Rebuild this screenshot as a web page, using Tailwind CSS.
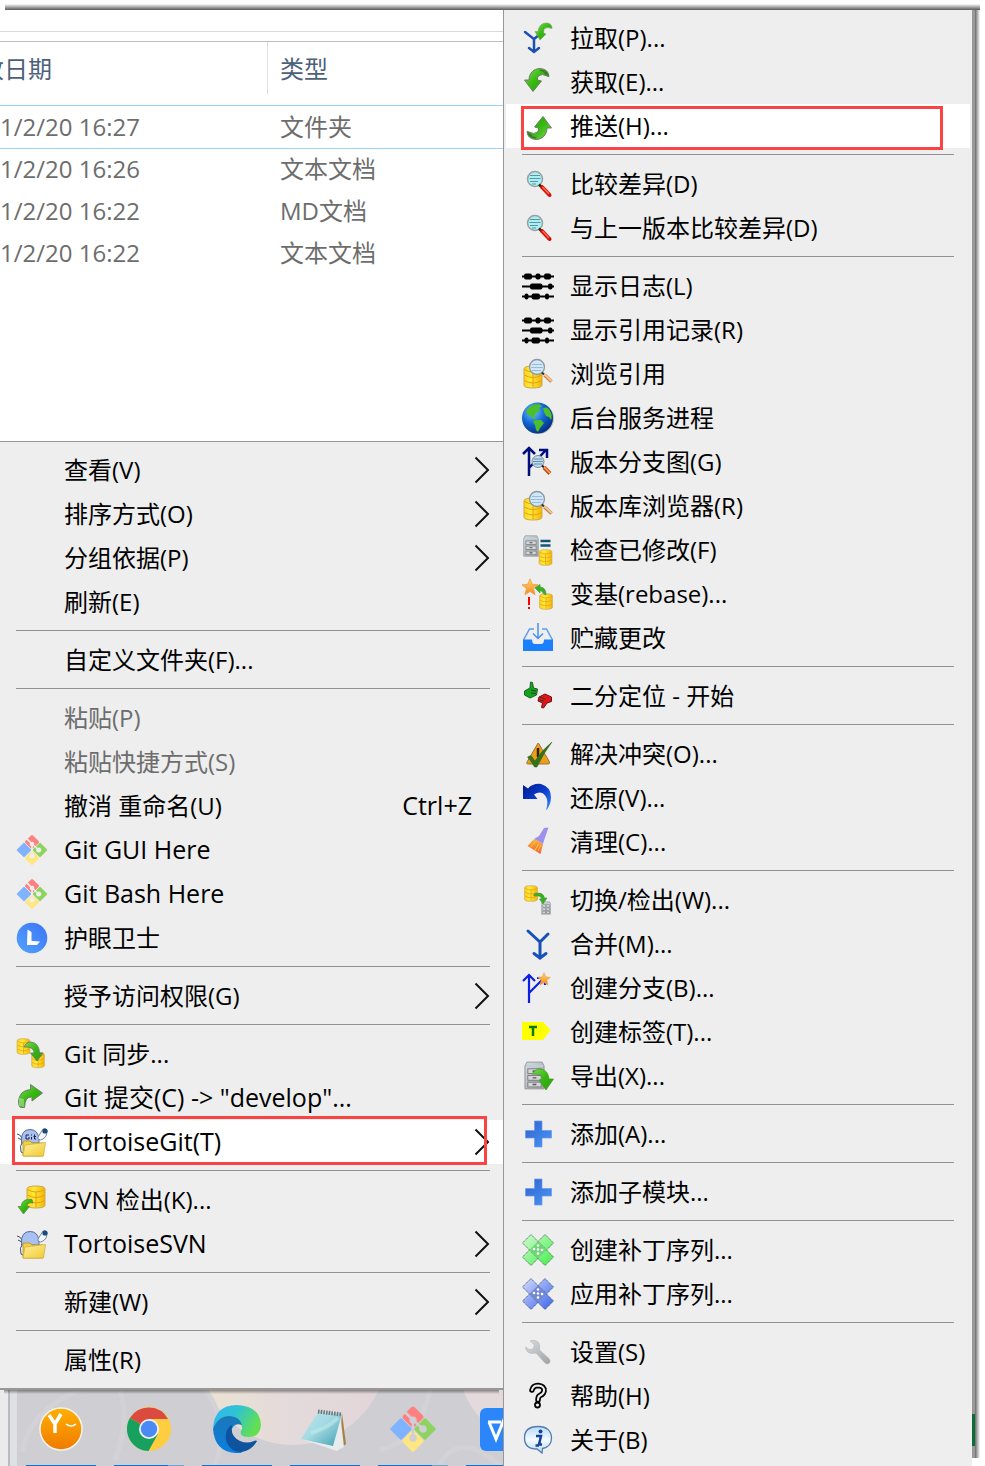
<!DOCTYPE html>
<html lang="zh-CN">
<head>
<meta charset="utf-8">
<title>TortoiseGit</title>
<script src="https://cdn.jsdelivr.net/npm/@tailwindcss/browser@4"></script>
</head>
<body class="flex min-h-screen flex-col overflow-x-hidden bg-white font-['Open_Sans','Noto_Sans_CJK_SC',sans-serif] text-2xl text-black">

<svg class="absolute size-0" aria-hidden="true">
  <defs>
    <linearGradient id="gGreen" x1="0" y1="0" x2="1" y2="1"><stop offset="0" stop-color="#7ed957"/><stop offset=".5" stop-color="#35b80f"/><stop offset="1" stop-color="#2c9a10"/></linearGradient>
    <linearGradient id="gGold" x1="0" y1="0" x2="1" y2="0"><stop offset="0" stop-color="#ffd21a"/><stop offset=".4" stop-color="#ffe83d"/><stop offset="1" stop-color="#f5b400"/></linearGradient>
    <linearGradient id="gPlus" x1="0" y1="0" x2="1" y2="1"><stop offset="0" stop-color="#2f62cf"/><stop offset="1" stop-color="#4a98f5"/></linearGradient>
    <linearGradient id="gUndo" x1="0" y1="0" x2="1" y2="1"><stop offset="0" stop-color="#001a8c"/><stop offset=".5" stop-color="#0a3ccc"/><stop offset="1" stop-color="#3f8cff"/></linearGradient>
    <linearGradient id="gSteel" x1="0" y1="0" x2="1" y2="1"><stop offset="0" stop-color="#d8dcdf"/><stop offset="1" stop-color="#9ea3a7"/></linearGradient>
    <linearGradient id="gFolder" x1="0" y1="0" x2="1" y2="1"><stop offset="0" stop-color="#ffee9a"/><stop offset="1" stop-color="#f1cc35"/></linearGradient>
    <linearGradient id="gPatchG" x1="0" y1="0" x2="1" y2="1"><stop offset="0" stop-color="#d4fbd2"/><stop offset="1" stop-color="#3fee48"/></linearGradient>
    <linearGradient id="gPatchB" x1="0" y1="0" x2="1" y2="1"><stop offset="0" stop-color="#d3defc"/><stop offset="1" stop-color="#3a63ea"/></linearGradient>
    <linearGradient id="gBroom" x1="0" y1="0" x2="0" y2="1"><stop offset="0" stop-color="#f9b93a"/><stop offset="1" stop-color="#ff5a2a"/></linearGradient>
    <linearGradient id="gStar" x1="0" y1="0" x2="0" y2="1"><stop offset="0" stop-color="#ffd46b"/><stop offset="1" stop-color="#f58a1f"/></linearGradient>
    <radialGradient id="gGlobe" cx=".35" cy=".3" r=".8"><stop offset="0" stop-color="#6cc6ff"/><stop offset=".5" stop-color="#1264d0"/><stop offset="1" stop-color="#03256e"/></radialGradient>
    <linearGradient id="gInfo" x1="0" y1="0" x2="0" y2="1"><stop offset="0" stop-color="#b8dcf9"/><stop offset=".5" stop-color="#f4faff"/><stop offset="1" stop-color="#b4dafa"/></linearGradient>
    <linearGradient id="gY" x1="0" y1="0" x2="0" y2="1"><stop offset="0" stop-color="#ffb000"/><stop offset="1" stop-color="#ef7a00"/></linearGradient>
    <linearGradient id="gEdgeTop" x1="0" y1="0" x2="1" y2=".4"><stop offset="0" stop-color="#34b4f4"/><stop offset=".5" stop-color="#2fc3d2"/><stop offset="1" stop-color="#62e052"/></linearGradient>
    <linearGradient id="gEdgeLeft" x1="0" y1="0" x2="0" y2="1"><stop offset="0" stop-color="#1b77b8"/><stop offset="1" stop-color="#0b7fe0"/></linearGradient>
    <linearGradient id="gNote" x1="0" y1="0" x2="1" y2="1"><stop offset="0" stop-color="#b9e4ea"/><stop offset=".45" stop-color="#a5dbe3"/><stop offset="1" stop-color="#3e9fb2"/></linearGradient>
    <linearGradient id="gL" x1="0" y1="1" x2="1" y2="0"><stop offset="0" stop-color="#55a2ff"/><stop offset="1" stop-color="#3a74f5"/></linearGradient>

    <symbol id="arrow-dl" viewBox="0 0 32 32"><path d="M11 25.500L2.500 14H7C7 7 12 2.500 18 2.500Q26.500 3 27 10.500Q26 10.500 25 10Q20 7 16.500 10Q15 11.500 15.500 14L19.500 15Z" fill="url(#gGreen)" stroke="#6f7f6a" stroke-width="1"/><path d="M18 3.500Q26 4 26.500 10L22.500 8Q22 5 17.500 5Z" fill="#3c7d2a"/></symbol>
    <symbol id="db" viewBox="0 0 20 24"><path d="M1 4Q1 1 10 1T19 4V20Q19 23 10 23T1 20Z" fill="url(#gGold)" stroke="#c9a94e" stroke-width="1"/><path d="M1.500 4.500Q5 7 10 7T18.500 4.500M1.500 10Q5 12.500 10 12.500T18.500 10M1.500 15.500Q5 18 10 18T18.500 15.500M10 7V22" fill="none" stroke="#e3a20d" stroke-width="1"/></symbol>
    <symbol id="lens" viewBox="0 0 32 32"><circle cx="13" cy="11" r="7.500" fill="#a5f1f5" stroke="#9a9fa2" stroke-width="1.500"/><path d="M8 7.500H18M7.500 10.500H18.500M8 13.500H16M10 16H14" stroke="#6a8f98" stroke-width="1.200"/><path d="M17 16.500L20 19.500" stroke="#222" stroke-width="2.500"/><path d="M20 19L27.500 27" stroke="#d10f00" stroke-width="4" stroke-linecap="round"/><path d="M20.500 19L27 26" stroke="#ff6a55" stroke-width="1.500"/></symbol>
    <symbol id="lens2" viewBox="0 0 32 32"><circle cx="15" cy="9" r="7.500" fill="#cfe7f8" stroke="#8d979e" stroke-width="1.300"/><path d="M10 6.500H20M9 9.500H21M10 12.500H19" stroke="#9bbbd4" stroke-width="1"/><path d="M20 14.500L22 16.500" stroke="#333" stroke-width="2"/><path d="M22.500 17L29.500 23.500" stroke="#b8834d" stroke-width="3.500"/><path d="M22.500 16.500L29.500 23" stroke="#ffc58a" stroke-width="1.800"/></symbol>
    <symbol id="cabinet" viewBox="0 0 22 30"><path d="M3 1H19L21 5V29H1V5Z" fill="url(#gSteel)" stroke="#909599"/><path d="M2 5H20" stroke="#b9d2dc" stroke-width="2"/><g fill="#d5d7d8" stroke="#777b7e"><rect x="4" y="8" width="14" height="5"/><rect x="4" y="15" width="14" height="5"/><rect x="4" y="22" width="14" height="5"/></g><path d="M9 10.500H13M9 17.500H13M9 24.500H13" stroke="#555" stroke-width="1.500"/></symbol>
    <symbol id="star" viewBox="0 0 20 20"><path d="M10 1L12.600 7L19 7.600L14 11.800L15.600 18.500L10 15L4.400 18.500L6 11.800L1 7.600L7.400 7Z" fill="url(#gStar)" stroke="#e89a45" stroke-width=".8"/></symbol>

    <symbol id="pull" viewBox="0 0 32 32"><path d="M3 10L12 17V29M7 26L12 30L17 26M12 17L17 13" fill="none" stroke="#1c4fae" stroke-width="2.500" stroke-linecap="round"/><path d="M18 18L13 9.500H16Q17 1.500 24 1Q30 1 30 6.500Q25 4.500 22 7L21.500 11L24 12Z" fill="url(#gGreen)" stroke="#6fa35c" stroke-width=".6"/></symbol>
    <symbol id="push" viewBox="0 0 32 32"><g transform="rotate(180 16 16)"><use href="#arrow-dl" width="32" height="32"/></g></symbol>
    <symbol id="log" viewBox="0 0 32 32"><path d="M0 6.500H32M0 16.500H32M0 26.500H32" stroke="#000" stroke-width="2"/><g fill="#000"><rect x="2" y="3.500" width="8" height="6" rx="2"/><rect x="13.500" y="3.500" width="5" height="6" rx="2"/><rect x="22" y="3.500" width="7" height="6" rx="2"/><rect x="8" y="13.500" width="12.500" height="6" rx="2"/><rect x="26" y="13.500" width="4.500" height="6" rx="2"/><rect x="2.500" y="23.500" width="4" height="6" rx="2"/><rect x="9.500" y="23.500" width="8.500" height="6" rx="2"/><rect x="23" y="23.500" width="4" height="6" rx="2"/></g></symbol>
    <symbol id="browse" viewBox="0 0 32 32"><use href="#db" x="1" y="7" width="20" height="24"/><use href="#lens2" width="32" height="32"/></symbol>
    <symbol id="globe" viewBox="0 0 32 32"><circle cx="16.500" cy="16.500" r="15.500" fill="#777" opacity=".4"/><circle cx="15.500" cy="16" r="15.500" fill="url(#gGlobe)"/><path d="M4 9Q9 2 17 2L20 4L17 6L18 9L14 11L12 15L15 17L12 17L7 13Q5 12 4 9ZM13 18L19 18L22 21L18 26L16 30L14 28L13 23L11 20ZM21 6Q26 4 28 9Q31 13 29 18L27 15L24 14L22 10Z" fill="#4cbf2b"/></symbol>
    <symbol id="graph" viewBox="0 0 32 32"><path d="M7 30V4M1 8L7 2L13 8M7 22L24 4M17 4H25V12" fill="none" stroke="#000f7a" stroke-width="2.500"/><circle cx="16" cy="15.500" r="6" fill="#b9dcf0" stroke="#7f8e9a"/><path d="M11.500 13H20.500M11 15.500H21M12 18H20" stroke="#6d8ba5"/><path d="M20 19.500L22 21.500" stroke="#222" stroke-width="2"/><path d="M22 21.500L28 27.500" stroke="#c3511a" stroke-width="4"/><path d="M22 21L28 27" stroke="#ffa35c" stroke-width="1.500"/></symbol>
    <symbol id="check" viewBox="0 0 32 32"><use href="#cabinet" x="1" y="1" width="16" height="22"/><path d="M18.500 7H28.500M18.500 11.500H28.500" stroke="#0f5678" stroke-width="2.500"/><use href="#db" x="16" y="15" width="15" height="17"/></symbol>
    <symbol id="rebase" viewBox="0 0 32 32"><use href="#star" x="-1" y="0" width="18" height="18"/><path d="M7 19V27M7 29V31" stroke="#f00" stroke-width="2"/><use href="#db" x="16" y="15" width="16" height="17"/><path d="M13 10L18 6.500V9Q24 9 24 17L21.500 16Q21 13 18 12.500V15Z" fill="#35b41a" stroke="#5c8d4f" stroke-width=".7"/></symbol>
    <symbol id="stash" viewBox="0 0 32 32"><path d="M1.500 18L7.500 7H12M20 7H24.500L30.500 18" fill="none" stroke="#5c9cf2" stroke-width="1.500"/><path d="M1 17.500H10Q10 22 13 22H19Q22 22 22 17.500H31V29H1Z" fill="#1a80ff"/><path d="M16 1V16M11 11.500L16 16.500L21 11.500" fill="none" stroke="#4a8fee" stroke-width="1.500"/></symbol>
    <symbol id="bisect" viewBox="0 0 32 32"><path d="M2.500 11L8 8L8.500 2L10.500 2.500L11.500 8L15.500 9L14.500 15L8 18L2.500 15Z" fill="#10a51c" stroke="#225f27"/><path d="M17 17L23 14L29.500 17L29.500 21.500L25 23L21.500 28L19.500 27.500L20.500 23L16 21Z" fill="#e3131a" stroke="#6d1212"/><path d="M9 10L14 11M9 13L14 13.500M17.500 17L23 19M17.500 20L22 21" stroke="#2c3a1c" stroke-width=".9"/></symbol>
    <symbol id="resolve" viewBox="0 0 32 32"><path d="M15.500 6Q16 4 17 6L27.500 24Q28 26 26 26H6Q4 26 5 24Z" fill="#e9a018" stroke="#99753a"/><path d="M16 10V19M16 21V23" stroke="#322200" stroke-width="2.500"/><path d="M5.500 19L9 17.500L13 23Q20 12 30 4Q21 16 15 29H12.500Q9 23 5.500 19Z" fill="#37721b" stroke="#285f14" stroke-width=".5"/></symbol>
    <symbol id="revert" viewBox="0 0 32 32"><path d="M1 3L6 6.500Q11 1 19 2Q29 5 29 15Q29 23 24 28.500Q27 19 23.500 14Q19 8 12 12.500L15.500 17H1Z" fill="url(#gUndo)"/></symbol>
    <symbol id="clean" viewBox="0 0 32 32"><path d="M22 2L26.500 1.500L22.500 13L21 18L12 13L17 10Z" fill="#9c91ec"/><path d="M12 13L21 18L18.500 28L5.500 20Z" fill="url(#gBroom)"/><path d="M13 16L9 21M17 18L13 24M19 19L16 25" stroke="#f6d14e" stroke-width="1"/></symbol>
    <symbol id="switch" viewBox="0 0 32 32"><use href="#db" x="1" y="1" width="16" height="17"/><use href="#cabinet" x="19" y="17" width="10" height="14"/><path d="M12 10Q21 7 22.500 14H25L21 20L17.500 15H19.500Q19 11 12 12Z" fill="#35b41a" stroke="#4d8a3e" stroke-width=".6"/></symbol>
    <symbol id="merge" viewBox="0 0 32 32"><path d="M6 3L18 14L26 6M18 14V29M12 25.500L18 30L24 25.500" fill="none" stroke="#1750b8" stroke-width="3" stroke-linecap="round"/></symbol>
    <symbol id="branch" viewBox="0 0 32 32"><path d="M7 31V3M1 9L7 3L13 9M7 21L22 6M15 6H23V13" fill="none" stroke="#0b1fe8" stroke-width="2.200"/><use href="#star" x="15" y="-1" width="14" height="16"/></symbol>
    <symbol id="tag" viewBox="0 0 32 32"><path d="M0 6H21L28.500 14L21 24H0Z" fill="#ff0"/><path d="M7 11H15M11 11V20" stroke="#087a08" stroke-width="2.500"/></symbol>
    <symbol id="export" viewBox="0 0 32 32"><use href="#cabinet" x="2" y="1" width="21" height="29"/><path d="M10 14Q13 9 19 9Q26 10 27 19H31.500L24 30L17 20L21 19Q19 13 10 14Z" fill="url(#gGreen)" stroke="#3f9a22" stroke-width=".7"/></symbol>
    <symbol id="plus" viewBox="0 0 32 32"><path d="M12.500 3H20V12.500H29.500V20H20V29H12.500V20H3.500V12.500H12.500Z" fill="url(#gPlus)" stroke="#6b98e8" stroke-width=".7"/></symbol>
    <symbol id="patch-g" viewBox="0 0 32 32"><g stroke="#3c5f3e" stroke-width=".8" stroke-dasharray="1.500 .7"><path d="M23 .500L31.500 9L9 31.500L.500 23Z" fill="url(#gPatchG)"/><path d="M9 .500L31.500 23L23 31.500L.500 9Z" fill="url(#gPatchG)"/></g><path d="M16 7.500L24.500 16L16 24.500L7.500 16Z" fill="#6fd678"/><g fill="#fff"><circle cx="16" cy="11.500" r="1.300"/><circle cx="12" cy="15" r="1.300"/><circle cx="20" cy="16" r="1.300"/><circle cx="16" cy="19.500" r="1.300"/><circle cx="16" cy="15.500" r="1.200"/></g></symbol>
    <symbol id="patch-b" viewBox="0 0 32 32"><g stroke="#354571" stroke-width=".8" stroke-dasharray="1.500 .7"><path d="M23 .500L31.500 9L9 31.500L.500 23Z" fill="url(#gPatchB)"/><path d="M9 .500L31.500 23L23 31.500L.500 9Z" fill="url(#gPatchB)"/></g><path d="M16 7.500L24.500 16L16 24.500L7.500 16Z" fill="#7288cf"/><g fill="#fff"><circle cx="16" cy="11.500" r="1.300"/><circle cx="12" cy="15" r="1.300"/><circle cx="20" cy="16" r="1.300"/><circle cx="16" cy="19.500" r="1.300"/><circle cx="16" cy="15.500" r="1.200"/></g></symbol>
    <symbol id="wrench" viewBox="0 0 32 32"><path d="M8 5L12.500 9L11 13L7 13.500L3.500 11Q4 17 10 17.500L14 17L23 27Q25 29 27.500 27Q29 25 27 22.500L17.500 14Q19 6 13 4.500Q10 4 8 5Z" fill="url(#gSteel)" stroke="#b5b5b5" stroke-width=".6"/></symbol>
    <symbol id="help" viewBox="0 0 32 32"><path d="M10 10Q11 5.500 16 5.500Q22.500 6 22 11Q21.500 14 18 15.500Q16 16.500 16 20" fill="none" stroke="#000" stroke-width="5.500" stroke-linecap="round"/><path d="M10 10Q11 5.500 16 5.500Q22.500 6 22 11Q21.500 14 18 15.500Q16 16.500 16 20" fill="none" stroke="#eee" stroke-width="2" stroke-linecap="round"/><circle cx="15.500" cy="25" r="2.500" fill="#eee" stroke="#000" stroke-width="1.800"/></symbol>
    <symbol id="about" viewBox="0 0 32 32"><path d="M16 2.500C25 2.500 29.500 7 29.500 14C29.500 20 25.500 23.500 20.500 24.500L20 29L15 25C7 25 2.500 21 2.500 14C2.500 7 7 2.500 16 2.500Z" fill="url(#gInfo)" stroke="#547bb0" stroke-width="1.300"/><circle cx="18.500" cy="7.500" r="2" fill="#173f9c"/><path d="M14 12H19L17 20.500H20M13.500 21.500H17" fill="none" stroke="#173f9c" stroke-width="2.500"/></symbol>

    <symbol id="git" viewBox="0 0 48 48"><rect x="-8" y="-8" width="16" height="16" rx="2" transform="translate(24 12) rotate(45)" fill="#ff8080"/><rect x="-8" y="-8" width="16" height="16" rx="1.500" transform="translate(12 24) rotate(45)" fill="#80b3ff"/><rect x="-8" y="-8" width="16" height="16" rx="1.500" transform="translate(36 24) rotate(45)" fill="#8dd35f"/><rect x="-8" y="-8" width="16" height="16" rx="1.500" transform="translate(24 36) rotate(45)" fill="#ffe680"/><path d="M16 7L24 15V33M24 15L34 24" fill="none" stroke="currentColor" stroke-width="2.500"/><circle cx="24" cy="15" r="3.500" fill="currentColor"/><circle cx="24" cy="33" r="3.800" fill="currentColor"/><circle cx="34" cy="24" r="3.800" fill="currentColor"/></symbol>
    <symbol id="eye" viewBox="0 0 32 32"><circle cx="16" cy="16" r="15.300" fill="url(#gL)"/><path d="M11.500 7.500L15.500 10V19L24 19.500L21 23H11Z" fill="#fff"/></symbol>
    <symbol id="sync" viewBox="0 0 32 32"><use href="#db" x="0" y="0" width="15" height="17"/><use href="#db" x="15" y="13" width="14" height="18"/><path d="M8 9Q10 4 15 4Q23 5 23.500 15H27L21 23L14.500 15H18.500Q17 8 8 9Z" fill="url(#gGreen)" stroke="#6f7f6a" stroke-width=".9"/></symbol>
    <symbol id="commit" viewBox="0 0 32 32"><path d="M14.500 2.500L26.500 11L16 19V15Q9 14 8.500 25.500H5Q2.500 25 2.500 19Q3.500 8.500 14.500 7.500Z" fill="url(#gGreen)" stroke="#6f7f6a"/><path d="M3 16V24L8 25V17Z" fill="#fff" opacity=".35"/></symbol>
    <symbol id="turtle" viewBox="0 0 32 32"><path d="M1 8Q4 8 6 12M2 12L6 14M7 15Q3 20 5 26L9 28" fill="#fff" stroke="#3b4c63"/><path d="M5.500 15Q5 3.500 14 3.500Q22 3.500 23 13V17H5.500Z" fill="#a9c0f3" stroke="#5a6d96"/><path d="M22 11L27 3Q31 2 31 6Q31 11 27 13Q25 15 22 13Z" fill="#f3f6fa" stroke="#7789a0"/><circle cx="29" cy="5" r="2.600" fill="#18497b"/><path d="M7 15H14L16 17H27V30H7Z" fill="#f3cf45" stroke="#b99a3a"/><path d="M9 19L29.500 16.500L27.500 30H7Z" fill="url(#gFolder)" stroke="#d4b23e" stroke-width=".8"/></symbol>
    <symbol id="svnco" viewBox="0 0 32 32"><use href="#db" x="10" y="1" width="20" height="24"/><path d="M7.500 30L2 22.500H5Q6 14 16 15.500L17 19Q11 18 11 22.500H13.500Z" fill="url(#gGreen)" stroke="#4d8a3e" stroke-width=".7"/></symbol>
    <symbol id="chev" viewBox="0 0 16 28"><path d="M1.500 1.500L14 14L1.500 26.500" fill="none" stroke="#111" stroke-width="2"/></symbol>
  </defs>
</svg>

<!-- Window shadow along the top edge -->
<div class="mr-[5px] ml-[5px] h-[10px] shrink-0 bg-linear-to-b from-white from-40% to-[#5a5a5a]"></div>

<main class="flex flex-1">
  <div class="flex min-w-0 flex-[503_1_0%] flex-col">

    <!-- File list -->
    <section class="flex h-[431px] flex-col overflow-hidden pt-[21px]">
      <div class="h-[10px] shrink-0 border-t border-[#d9d9d9]"></div>
      <table class="w-full table-fixed border-collapse text-left text-[#6d6d6d]">
        <colgroup><col class="w-[268px]"><col></colgroup>
        <thead>
          <tr class="h-16 border-t border-[#bdbdbd] text-[#4c607a]">
            <th class="p-0 align-top font-normal"><div class="-ml-5 flex h-[52px] items-center border-r border-[#dedede] pt-0.5 whitespace-nowrap">改日期</div></th>
            <th class="p-0 align-top font-normal"><div class="flex h-[52px] items-center pt-0.5 pl-3">类型</div></th>
          </tr>
        </thead>
        <tbody>
          <tr class="h-[43px] border-y border-[#99d1ff]"><td class="p-0 leading-9">1/2/20 16:27</td><td class="p-0 pl-3 leading-9">文件夹</td></tr>
          <tr class="h-[42px] align-top"><td class="p-0 pt-0.5 leading-9">1/2/20 16:26</td><td class="p-0 pt-0.5 pl-3 leading-9">文本文档</td></tr>
          <tr class="h-[42px] align-top"><td class="p-0 pt-0.5 leading-9">1/2/20 16:22</td><td class="p-0 pt-0.5 pl-3 leading-9">MD文档</td></tr>
          <tr class="h-[42px] align-top"><td class="p-0 pt-0.5 leading-9">1/2/20 16:22</td><td class="p-0 pt-0.5 pl-3 leading-9">文本文档</td></tr>
        </tbody>
      </table>
    </section>

    <!-- Folder context menu -->
    <nav class="border-t border-b-2 border-[#979797] bg-[#eee] py-1.5">
      <button class="flex h-11 w-full items-center pr-[13px] pl-16 whitespace-nowrap">查看(V)<svg class="ml-auto h-7 w-4"><use href="#chev"/></svg></button>
      <button class="flex h-11 w-full items-center pr-[13px] pl-16 whitespace-nowrap">排序方式(O)<svg class="ml-auto h-7 w-4"><use href="#chev"/></svg></button>
      <button class="flex h-11 w-full items-center pr-[13px] pl-16 whitespace-nowrap">分组依据(P)<svg class="ml-auto h-7 w-4"><use href="#chev"/></svg></button>
      <button class="flex h-11 w-full items-center pl-16 whitespace-nowrap">刷新(E)</button>
      <hr class="mt-1.5 mr-[13px] mb-[7px] ml-4 border-[#919191]">
      <button class="flex h-11 w-full items-center pl-16 whitespace-nowrap">自定义文件夹(F)...</button>
      <hr class="mt-1.5 mr-[13px] mb-[7px] ml-4 border-[#919191]">
      <button disabled class="flex h-11 w-full items-center pl-16 whitespace-nowrap text-[#6d6d6d]">粘贴(P)</button>
      <button disabled class="flex h-11 w-full items-center pl-16 whitespace-nowrap text-[#6d6d6d]">粘贴快捷方式(S)</button>
      <button class="flex h-11 w-full items-center justify-between pr-[31px] pl-16 whitespace-nowrap"><span>撤消 重命名(U)</span><span class="text-[25px]">Ctrl+Z</span></button>
      <button class="flex h-11 w-full items-center gap-4 pl-4 text-[25px] whitespace-nowrap"><svg class="size-8 text-[#eee]"><use href="#git"/></svg>Git GUI Here</button>
      <button class="flex h-11 w-full items-center gap-4 pl-4 text-[25px] whitespace-nowrap"><svg class="size-8 text-[#eee]"><use href="#git"/></svg>Git Bash Here</button>
      <button class="flex h-11 w-full items-center gap-4 pl-4 whitespace-nowrap"><svg class="size-8"><use href="#eye"/></svg>护眼卫士</button>
      <hr class="mt-1.5 mr-[13px] mb-[7px] ml-4 border-[#919191]">
      <button class="flex h-11 w-full items-center pr-[13px] pl-16 whitespace-nowrap">授予访问权限(G)<svg class="ml-auto h-7 w-4"><use href="#chev"/></svg></button>
      <hr class="mt-1.5 mr-[13px] mb-[7px] ml-4 border-[#919191]">
      <button class="flex h-11 w-full items-center gap-4 pl-4 whitespace-nowrap"><svg class="size-8"><use href="#sync"/></svg>Git 同步...</button>
      <button class="flex h-11 w-full items-center gap-4 pl-4 text-[25px] whitespace-nowrap"><svg class="size-8"><use href="#commit"/></svg>Git 提交(C) -&gt; "develop"...</button>
      <div class="relative bg-white">
        <button class="flex h-11 w-full items-center gap-4 pr-[13px] pl-4 text-[25px] whitespace-nowrap"><svg class="size-8"><use href="#turtle"/><path d="M13 9H10V13H13V11M15.500 11V13.500M15.500 8.500V9.500M18.500 8.500V13H20M17.500 10.500H20" fill="none" stroke="#1d2740"/></svg>TortoiseGit(T)<svg class="ml-auto h-7 w-4"><use href="#chev"/></svg></button>
        <div class="pointer-events-none absolute -top-1 right-4 -bottom-px left-3 border-3 border-[#fa4444]"></div>
      </div>
      <hr class="mt-1.5 mr-[13px] mb-[7px] ml-4 border-[#919191]">
      <button class="flex h-11 w-full items-center gap-4 pl-4 whitespace-nowrap"><svg class="size-8"><use href="#svnco"/></svg>SVN 检出(K)...</button>
      <button class="flex h-11 w-full items-center gap-4 pr-[13px] pl-4 text-[25px] whitespace-nowrap"><svg class="size-8"><use href="#turtle"/></svg>TortoiseSVN<svg class="ml-auto h-7 w-4"><use href="#chev"/></svg></button>
      <hr class="mt-1.5 mr-[13px] mb-[7px] ml-4 border-[#919191]">
      <button class="flex h-11 w-full items-center pr-[13px] pl-16 whitespace-nowrap">新建(W)<svg class="ml-auto h-7 w-4"><use href="#chev"/></svg></button>
      <hr class="mt-1.5 mr-[13px] mb-[7px] ml-4 border-[#919191]">
      <button class="flex h-11 w-full items-center pl-16 whitespace-nowrap">属性(R)</button>
    </nav>

    <!-- Taskbar -->
    <footer class="relative flex flex-1 overflow-hidden bg-[#cfced3]">
      <svg class="absolute inset-0 h-full w-full" aria-hidden="true">
        <defs><linearGradient id="gMoon"><stop offset="0" stop-color="#ece3d3"/><stop offset=".5" stop-color="#e3dadb"/><stop offset="1" stop-color="#e2d5d9"/></linearGradient></defs>
        <circle cx="293" cy="-39" r="94" fill="url(#gMoon)"/><circle cx="535" cy="-25" r="76" fill="#e4d9db"/>
        <g fill="none" stroke="#d3d2d7" stroke-width="5"><path d="M22 62Q30 20 80 0M120 0Q130 30 115 70M215 76Q230 30 205 0M380 60Q420 50 430 0M440 74Q460 40 500 76"/></g>
      </svg>
      <div class="relative w-[17px] shrink-0 bg-[#dfe0e4]"><div class="h-full w-2.5 border-r-2 border-[#bbb] bg-[#ebebed]"></div></div>
      <button aria-label="Y" class="relative flex w-[88px] shrink-0 flex-col items-center pt-[15px]"><svg class="size-12" viewBox="0 0 48 48"><circle cx="24" cy="24" r="21" fill="url(#gY)" stroke="#f7f3ee" stroke-width="1.500"/><path d="M12 10L18 19L24 9M18 19V28" fill="none" stroke="#fff" stroke-width="3.500"/><path d="M29 19Q34 23 39 19" fill="none" stroke="#fff" stroke-width="1.500"/></svg><span class="mt-auto h-px w-[70px] bg-[#0f72c8]"></span></button>
      <button aria-label="Chrome" class="relative flex w-[88px] shrink-0 flex-col items-center pt-[15px]"><svg class="size-12" viewBox="0 0 48 48"><circle cx="24" cy="24" r="22" fill="#ffcd40"/><path d="M24 24L4.900 13A22 22 0 0 1 43 14H24Z" fill="#db4a3e"/><path d="M24 24L4.900 13A22 22 0 0 0 23.500 46L33 29Z" fill="#17a05e"/><circle cx="24" cy="24" r="10" fill="#f1f1f1"/><circle cx="24" cy="24" r="8.200" fill="#4b89f5"/></svg><span class="mt-auto flex h-px w-[70px] bg-[#6fa8d6]"><i class="w-[54px] bg-[#0f72c8]"></i></span></button>
      <button aria-label="Edge" class="relative flex w-[88px] shrink-0 flex-col items-center pt-[15px]"><svg class="size-12" viewBox="0 0 48 48"><path d="M0 24Q1 0 24 0Q47 1 48 20Q47 32 36 32Q26 32 28 26Q31 22 26 17Q15 7 0 24Z" fill="url(#gEdgeTop)"/><path d="M0 24Q5 11 17 11Q27 12 29 20Q20 17 18 27Q16 38 29 48Q2 50 0 24Z" fill="url(#gEdgeLeft)"/><path d="M18 20Q10 28 14 38Q19 48 29 47Q39 45 44 36Q43 35 41 36Q34 39 27 36Q17 31 19 21Z" fill="#0e539d"/></svg><span class="mt-auto h-px w-[70px] bg-[#0f72c8]"></span></button>
      <button aria-label="Notepad" class="relative flex w-[88px] shrink-0 flex-col items-center pt-[15px]"><svg class="size-12" viewBox="0 0 48 48"><path d="M41 8L45 39L38 45Z" fill="#a78148"/><path d="M39 8L43 42L36 46L3 35L20 6Z" fill="#e9eced"/><path d="M18 6L41 9L32 41L0 34Z" fill="url(#gNote)"/><path d="M10 28Q25 24 37 13" fill="none" stroke="#c8edf1" stroke-width="4" opacity=".5"/><path d="M17 6.500L41 9.500" stroke="#6d7477" stroke-width="4" stroke-dasharray="1.500 1.200"/></svg><span class="mt-auto h-px w-[70px] bg-[#0f72c8]"></span></button>
      <button aria-label="Git" class="relative flex w-[88px] shrink-0 flex-col items-center pt-[15px]"><svg class="size-12 text-[#cfced3]"><use href="#git"/></svg><span class="mt-auto flex h-px w-[70px] bg-[#6fa8d6]"><i class="w-[54px] bg-[#0f72c8]"></i></span></button>
      <button aria-label="WPS" class="relative flex w-[88px] shrink-0 flex-col items-center pt-[18px]"><svg class="size-[43px]" viewBox="0 0 43 43"><rect width="43" height="43" rx="6" fill="#2b86fb"/><path d="M8 14H21M9 14L16 31L23 14L29 31L35 14" fill="none" stroke="#fff" stroke-width="3"/></svg><span class="mt-auto h-px w-[70px] bg-[#0f72c8]"></span></button>
      <div class="absolute inset-x-1 top-0 h-1 bg-linear-to-b from-black/40 to-transparent"></div>
    </footer>
  </div>

  <!-- TortoiseGit submenu -->
  <nav class="flex-[468_1_0%] border-l border-[#979797] bg-[#eee] pt-1.5">
    <button class="flex h-11 w-full items-center gap-4 pl-[18px] whitespace-nowrap"><svg class="size-8"><use href="#pull"/></svg>拉取(P)...</button>
    <button class="flex h-11 w-full items-center gap-4 pl-[18px] whitespace-nowrap"><svg class="size-8"><use href="#arrow-dl"/></svg>获取(E)...</button>
    <div class="relative mx-0.5 bg-white">
      <button class="flex h-11 w-full items-center gap-4 pl-4 whitespace-nowrap"><svg class="size-8"><use href="#push"/></svg>推送(H)...</button>
      <div class="pointer-events-none absolute top-0.5 right-[27px] -bottom-0.5 left-[15px] border-3 border-[#fa4444]"></div>
    </div>
    <hr class="mt-1.5 mr-[18px] mb-[7px] ml-[18px] border-[#919191]">
    <button class="flex h-11 w-full items-center gap-4 pl-[18px] whitespace-nowrap"><svg class="size-8"><use href="#lens"/></svg>比较差异(D)</button>
    <button class="flex h-11 w-full items-center gap-4 pl-[18px] whitespace-nowrap"><svg class="size-8"><use href="#lens"/></svg>与上一版本比较差异(D)</button>
    <hr class="mt-1.5 mr-[18px] mb-[7px] ml-[18px] border-[#919191]">
    <button class="flex h-11 w-full items-center gap-4 pl-[18px] whitespace-nowrap"><svg class="size-8"><use href="#log"/></svg>显示日志(L)</button>
    <button class="flex h-11 w-full items-center gap-4 pl-[18px] whitespace-nowrap"><svg class="size-8"><use href="#log"/></svg>显示引用记录(R)</button>
    <button class="flex h-11 w-full items-center gap-4 pl-[18px] whitespace-nowrap"><svg class="size-8"><use href="#browse"/></svg>浏览引用</button>
    <button class="flex h-11 w-full items-center gap-4 pl-[18px] whitespace-nowrap"><svg class="size-8"><use href="#globe"/></svg>后台服务进程</button>
    <button class="flex h-11 w-full items-center gap-4 pl-[18px] whitespace-nowrap"><svg class="size-8"><use href="#graph"/></svg>版本分支图(G)</button>
    <button class="flex h-11 w-full items-center gap-4 pl-[18px] whitespace-nowrap"><svg class="size-8"><use href="#browse"/></svg>版本库浏览器(R)</button>
    <button class="flex h-11 w-full items-center gap-4 pl-[18px] whitespace-nowrap"><svg class="size-8"><use href="#check"/></svg>检查已修改(F)</button>
    <button class="flex h-11 w-full items-center gap-4 pl-[18px] whitespace-nowrap"><svg class="size-8"><use href="#rebase"/></svg>变基(rebase)...</button>
    <button class="flex h-11 w-full items-center gap-4 pl-[18px] whitespace-nowrap"><svg class="size-8"><use href="#stash"/></svg>贮藏更改</button>
    <hr class="mt-1.5 mr-[18px] mb-[7px] ml-[18px] border-[#919191]">
    <button class="flex h-11 w-full items-center gap-4 pl-[18px] whitespace-nowrap"><svg class="size-8"><use href="#bisect"/></svg>二分定位 - 开始</button>
    <hr class="mt-1.5 mr-[18px] mb-[7px] ml-[18px] border-[#919191]">
    <button class="flex h-11 w-full items-center gap-4 pl-[18px] whitespace-nowrap"><svg class="size-8"><use href="#resolve"/></svg>解决冲突(O)...</button>
    <button class="flex h-11 w-full items-center gap-4 pl-[18px] whitespace-nowrap"><svg class="size-8"><use href="#revert"/></svg>还原(V)...</button>
    <button class="flex h-11 w-full items-center gap-4 pl-[18px] whitespace-nowrap"><svg class="size-8"><use href="#clean"/></svg>清理(C)...</button>
    <hr class="mt-1.5 mr-[18px] mb-[7px] ml-[18px] border-[#919191]">
    <button class="flex h-11 w-full items-center gap-4 pl-[18px] whitespace-nowrap"><svg class="size-8"><use href="#switch"/></svg>切换/检出(W)...</button>
    <button class="flex h-11 w-full items-center gap-4 pl-[18px] whitespace-nowrap"><svg class="size-8"><use href="#merge"/></svg>合并(M)...</button>
    <button class="flex h-11 w-full items-center gap-4 pl-[18px] whitespace-nowrap"><svg class="size-8"><use href="#branch"/></svg>创建分支(B)...</button>
    <button class="flex h-11 w-full items-center gap-4 pl-[18px] whitespace-nowrap"><svg class="size-8"><use href="#tag"/></svg>创建标签(T)...</button>
    <button class="flex h-11 w-full items-center gap-4 pl-[18px] whitespace-nowrap"><svg class="size-8"><use href="#export"/></svg>导出(X)...</button>
    <hr class="mt-1.5 mr-[18px] mb-[7px] ml-[18px] border-[#919191]">
    <button class="flex h-11 w-full items-center gap-4 pl-[18px] whitespace-nowrap"><svg class="size-8"><use href="#plus"/></svg>添加(A)...</button>
    <hr class="mt-1.5 mr-[18px] mb-[7px] ml-[18px] border-[#919191]">
    <button class="flex h-11 w-full items-center gap-4 pl-[18px] whitespace-nowrap"><svg class="size-8"><use href="#plus"/></svg>添加子模块...</button>
    <hr class="mt-1.5 mr-[18px] mb-[7px] ml-[18px] border-[#919191]">
    <button class="flex h-11 w-full items-center gap-4 pl-[18px] whitespace-nowrap"><svg class="size-8"><use href="#patch-g"/></svg>创建补丁序列...</button>
    <button class="flex h-11 w-full items-center gap-4 pl-[18px] whitespace-nowrap"><svg class="size-8"><use href="#patch-b"/></svg>应用补丁序列...</button>
    <hr class="mt-1.5 mr-[18px] mb-[7px] ml-[18px] border-[#919191]">
    <button class="flex h-11 w-full items-center gap-4 pl-[18px] whitespace-nowrap"><svg class="size-8"><use href="#wrench"/></svg>设置(S)</button>
    <button class="flex h-11 w-full items-center gap-4 pl-[18px] whitespace-nowrap"><svg class="size-8"><use href="#help"/></svg>帮助(H)</button>
    <button class="flex h-11 w-full items-center gap-4 pl-[18px] whitespace-nowrap"><svg class="size-8"><use href="#about"/></svg>关于(B)</button>
  </nav>

  <!-- Shadow along the right edge -->
  <div class="flex w-[13px] shrink-0 pb-2" aria-hidden="true">
    <div class="flex w-[3px] flex-col justify-end bg-[#999]"><div class="mb-3 h-8 bg-[#0b6e35]"></div></div>
    <div class="w-[5px] bg-linear-to-r from-[#6a6a6a] to-white"></div>
  </div>
</main>
</body>
</html>
